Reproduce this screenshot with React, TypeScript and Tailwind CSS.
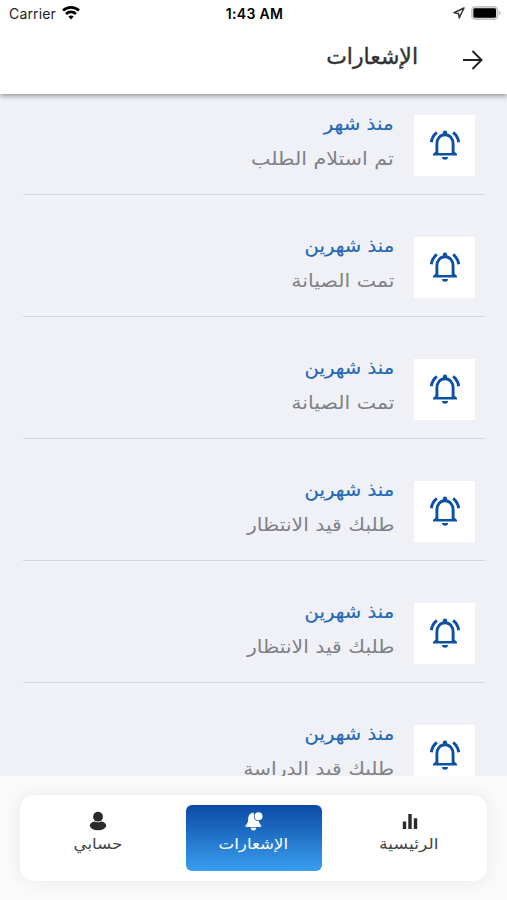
import React from "react";

type Notice = { time: string; body: string; timeClass: string; bodyClass: string };

const notices: Notice[] = [
  { time: "منذ شهر", body: "تم استلام الطلب", timeClass: "scale-x-[1.1]", bodyClass: "scale-x-[1.144]" },
  { time: "منذ شهرين", body: "تمت الصيانة", timeClass: "scale-x-[1.09]", bodyClass: "scale-x-[1.14]" },
  { time: "منذ شهرين", body: "تمت الصيانة", timeClass: "scale-x-[1.09]", bodyClass: "scale-x-[1.14]" },
  { time: "منذ شهرين", body: "طلبك قيد الانتظار", timeClass: "scale-x-[1.09]", bodyClass: "scale-x-[1.13]" },
  { time: "منذ شهرين", body: "طلبك قيد الانتظار", timeClass: "scale-x-[1.09]", bodyClass: "scale-x-[1.13]" },
  { time: "منذ شهرين", body: "طلبك قيد الدراسة", timeClass: "scale-x-[1.09]", bodyClass: "scale-x-[1.125]" },
];

function StatusBar() {
  return (
    <div dir="ltr" className="grid h-[26px] grid-cols-3 items-center pl-[9px] pr-[6px] font-['Inter',sans-serif] text-[14px] text-[#222]">
      <div className="flex items-center gap-[6px]">
        <span className="tracking-[0.15px]">Carrier</span>
        <svg width="18" height="14" viewBox="0 0 18 14" fill="none" stroke="#000" strokeWidth="2.7">
          <path d="M1 4.6a11.6 11.6 0 0 1 16 0" />
          <path d="M4 7.9a7.3 7.3 0 0 1 10 0" />
          <path d="M6.4 10.6a3.8 3.8 0 0 1 5.2 0L9 13.4z" fill="#000" stroke="none" />
        </svg>
      </div>
      <span className="ml-[-1px] text-center text-[14px] font-semibold tracking-[0.3px] text-black">1:43 AM</span>
      <div className="flex items-center justify-end gap-[6px]">
        <svg width="12" height="12" viewBox="0 0 12 12" fill="none" stroke="#333" strokeWidth="1.5" strokeLinejoin="round">
          <path d="M11 1 1 5.8l4.6.6.6 4.6z" />
        </svg>
        <svg width="30" height="14" viewBox="0 0 30 14">
          <rect x="0.7" y="0.7" width="26" height="12.6" rx="3.6" fill="#ddd" stroke="#c4c4c4" strokeWidth="1.4" />
          <rect x="2.4" y="2.3" width="22.6" height="9.4" rx="1.4" fill="#000" />
          <path d="M28 4.8q1.7.7 1.7 2.2T28 9.2z" fill="#bbb" />
        </svg>
      </div>
    </div>
  );
}

function Header() {
  return (
    <header className="relative z-10 h-[94px] shrink-0 bg-white shadow-[0_2px_5px_rgba(0,0,0,0.38)]">
      <StatusBar />
      <div className="mt-[2px] flex h-16 items-center pr-6">
        <svg className="mt-[-1px]" width="20" height="20" viewBox="0 0 20 20" fill="none" stroke="#222" strokeWidth="2">
          <path d="M0 10h18M9.5 1l9 9-9 9" />
        </svg>
        <h1 className="mr-[45px] mt-[-7px] whitespace-nowrap text-[22px] leading-8 text-[#333] [-webkit-text-stroke:0.4px_#333]">الإشعارات</h1>
      </div>
    </header>
  );
}

function RingingBell() {
  return (
    <svg width="32" height="30" viewBox="0 0 32 30" fill="none" stroke="#0b50a3" strokeWidth="2.9">
      <path d="M7.9 24V13.8c0-5.2 3.2-9 8.1-9s8.1 3.8 8.1 9V24" />
      <path d="M6.8 21.2 4 24v1.6h24V24l-2.8-2.8v1.9H6.8z" fill="#0b50a3" stroke="none" />
      <path d="M13.8 4.6V2.8a2.2 2.2 0 0 1 4.4 0v1.8z" fill="#0b50a3" stroke="none" />
      <path d="M13 27.1h6a3 2.6 0 0 1-6 0z" fill="#0b50a3" stroke="none" />
      <path d="M2.3 12.2Q3 6.6 7.8 2.4M29.7 12.2Q29 6.6 24.2 2.4" />
    </svg>
  );
}

function NoticeRow({ time, body, timeClass, bodyClass }: Notice) {
  return (
    <li className="flex h-[122.1px] shrink-0 items-start border-b border-[#d6d7dc] pr-[10px] pt-[42px]">
      <div className="flex size-[61px] shrink-0 items-center justify-center bg-white">
        <RingingBell />
      </div>
      <div className="mr-5 flex flex-col items-start">
        <span className={"mt-[-9px] h-[35px] origin-right whitespace-nowrap text-[18px] leading-[35px] text-[#2468b3] [-webkit-text-stroke:0.2px_#2468b3] " + timeClass}>{time}</span>
        <span className={"h-[35px] origin-right whitespace-nowrap text-[18px] leading-[35px] text-[#808086] " + bodyClass}>{body}</span>
      </div>
    </li>
  );
}

function NavBar() {
  return (
    <nav className="relative h-[124px] shrink-0 bg-[#fafafa] px-5 pt-[19px]">
      <div className="flex h-[86px] items-center justify-between rounded-[14px] bg-white px-[10px] shadow-[0_0_18px_rgba(0,0,0,0.07)]">
        <div className="flex h-[66px] w-[136px] flex-col items-center pt-2 text-[#444]">
          <svg className="mr-[-2px]" width="16" height="17" viewBox="0 0 16 17" fill="#2a2a2a">
            <path d="M.8 8.5h3.4V16H.8zM6.3 1h3.4v15H6.3zM11.8 5.2h3.4V16h-3.4z" />
          </svg>
          <span className="scale-x-[1.15] whitespace-nowrap text-[15px] leading-7">الرئيسية</span>
        </div>
        <div className="flex h-[66px] w-[136px] flex-col items-center rounded-[6px] bg-linear-to-b from-[#0c4aa5] to-[#3b9ff0] pt-[6px] text-white">
          <svg width="20" height="20" viewBox="0 0 20 20" fill="#fff">
            <path d="M9.6 1.6C5.8 2 4.4 4.8 4.2 8c-.1 3.4-1 4.8-2.4 6.3-.7.8-.3 1.7.8 1.7h13.6c1.1 0 1.5-.9.8-1.7-1.2-1.4-2-2.6-2.2-4.6L10.4 6z" />
            <path d="M6.7 16.8h5.6a2.8 2.6 0 0 1-5.6 0z" />
            <circle cx="14.4" cy="5.4" r="4.6" fill="#0f51ac" />
            <circle cx="14.5" cy="5.3" r="4" />
          </svg>
          <span className="mt-[-1px] scale-x-[1.11] whitespace-nowrap text-[15px] leading-7">الإشعارات</span>
        </div>
        <div className="flex h-[66px] w-[136px] flex-col items-center pt-[6px] text-[#444]">
          <svg width="18" height="20" viewBox="0 0 18 20" fill="#2a2a2a">
            <ellipse cx="9" cy="14.6" rx="8.2" ry="4.7" />
            <circle cx="9" cy="5.7" r="5.6" fill="#fff" />
            <circle cx="9" cy="5.7" r="4.9" />
          </svg>
          <span className="mt-[-1px] scale-x-[1.11] whitespace-nowrap text-[15px] leading-7">حسابي</span>
        </div>
      </div>
    </nav>
  );
}

export default function App() {
  return (
    <div dir="rtl" className="flex h-[900px] w-[507px] flex-col overflow-hidden bg-[#eff1f7] font-['DejaVu_Sans',sans-serif]">
      <Header />
      <main className="min-h-0 flex-1 overflow-hidden pl-[23px] pr-[22px]">
        <ul className="mt-[-21.5px] flex flex-col">
          {notices.map((n, i) => (
            <NoticeRow key={i} {...n} />
          ))}
        </ul>
      </main>
      <NavBar />
    </div>
  );
}
